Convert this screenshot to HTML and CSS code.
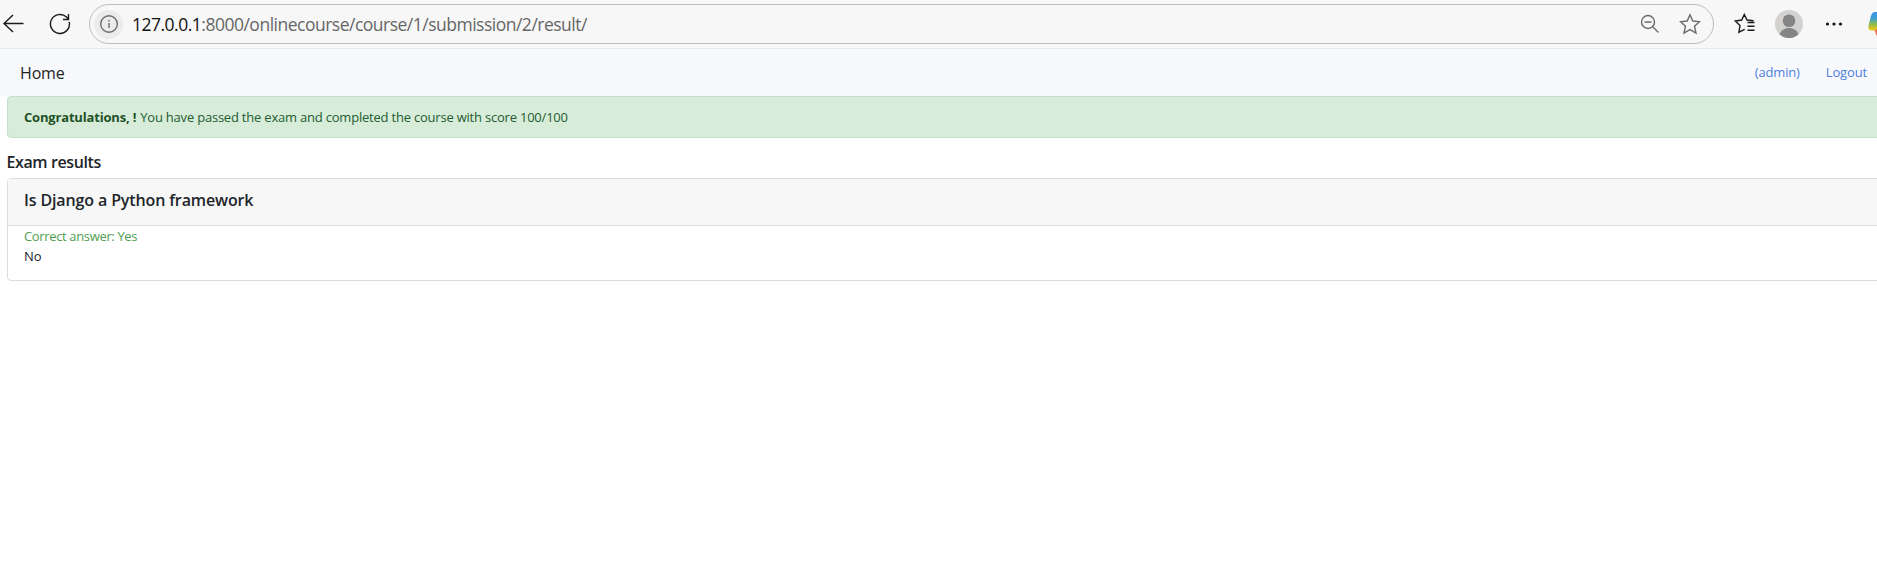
FILE: index.html
```html
<!DOCTYPE html>
<html lang="en">
<head>
<meta charset="utf-8">
<title>Exam results</title>
<link rel="stylesheet" href="styles.css">
</head>
<body>
<header class="toolbar">
  <svg class="back" width="22" height="22" viewBox="0 0 22 22"><path d="M20.5 10.500H1M10 2L1 10.500L10 19"/></svg>
  <svg class="reload" width="22" height="22" viewBox="0 0 22 22"><path d="M20.200 8.800A9.500 9.500 0 1 1 17.500 4.100L19.500 6.200M19.500 1V6.500H14"/></svg>
  <div class="address">
    <span class="info"><svg width="20" height="20" viewBox="0 0 20 20"><circle cx="10" cy="10" r="8.3"/><path d="M10 9V14M10 6V7.600"/></svg></span>
    <span class="url"><b>127.0.0.1</b>:8000/onlinecourse/course/1/submission/2/result/</span>
    <svg class="zoom" width="20" height="20" viewBox="0 0 20 20"><circle cx="8" cy="8" r="6.5"/><path d="M4.500 8H11.500M12.700 12.700L18.500 18.500"/></svg>
    <svg class="star" width="22" height="22" viewBox="0 0 22 22"><path d="M11 1.800L13.800 8L20.500 8.700L15.500 13.200L17 20L11 16.600L5 20L6.500 13.200L1.500 8.700L8.200 8Z"/></svg>
  </div>
  <svg class="favorites" width="22" height="22" viewBox="0 0 22 22"><path d="M19.500 7.700L13 7L10.300 1.500L7.700 7L1.300 8L6 12.500L4.900 19.200L10.700 16.300M13.500 9.500H20.500M13.500 13.300H20.500M13.500 17.200H20.500"/></svg>
  <svg class="avatar" width="28" height="28" viewBox="0 0 28 28"><circle cx="14" cy="14" r="14" fill="#d3d2d0"/><circle cx="14" cy="10.7" r="6.3" fill="#858585"/><path d="M4.500 24.300C6 20.300 9.500 18 14 18S22 20.300 23.500 24.300A14 14 0 0 1 4.500 24.300Z" fill="#858585"/></svg>
  <svg class="more" width="18" height="6" viewBox="0 0 18 6"><circle cx="2.5" cy="3" r="1.6"/><circle cx="9" cy="3" r="1.6"/><circle cx="15.5" cy="3" r="1.6"/></svg>
  <svg class="copilot" width="9" height="26" viewBox="0 0 9 26"><defs><linearGradient id="g" x1="0" y1="0" x2="0" y2="1"><stop offset="0" stop-color="#3b93e8"/><stop offset=".35" stop-color="#3e9fd0"/><stop offset=".65" stop-color="#8bba4c"/><stop offset="1" stop-color="#f5c914"/></linearGradient></defs><path d="M9 1H7C4.500 1 3.500 3 2.600 6L.6 14C-.2 17.500 1 19.500 4 19.500H9Z" fill="url(#g)"/><path d="M6.500 18.500H9V25Q7.500 23 7 20.500Z" fill="#ef7650"/></svg>
</header>
<nav class="navbar">
  <a class="brand">Home</a>
  <a class="link admin">(admin)</a>
  <a class="link logout">Logout</a>
</nav>
<main class="content">
  <div class="alert"><strong>Congratulations, !</strong><span class="message">You have passed the exam and completed the course with score 100/100</span></div>
  <h5 class="heading"><span>Exam results</span></h5>
  <section class="card">
    <h5 class="card-header"><span>Is Django a Python framework</span></h5>
    <div class="card-body">
      <div class="correct"><span>Correct answer: Yes</span></div>
      <div class="choice">No</div>
    </div>
  </section>
</main>
</body>
</html>
```
FILE: styles.css
```css
* { box-sizing: border-box; }
body {
  margin: 0;
  height: 585px;
  overflow: hidden;
  background: #fff;
  color: #212529;
  font: 13px/20px "Open Sans", "Noto Sans", sans-serif;
}
svg { flex: none; fill: none; stroke: #1b1b1b; stroke-width: 1.4; }
.toolbar {
  height: 49px;
  display: flex;
  align-items: center;
  background: #f7f7f7;
  border-bottom: 1px solid #e9ebed;
}
.back { margin-left: 3px; }
.reload { margin-left: 24px; }
.address {
  width: 1625px;
  height: 40px;
  flex: none;
  margin-left: 18px;
  display: flex;
  align-items: center;
  border: 1px solid #bdbdbd;
  border-radius: 20px;
}
.info {
  width: 29px;
  height: 29px;
  margin-left: 4px;
  display: grid;
  place-items: center;
  border-radius: 50%;
  background: #ebebeb;
}
.address svg { stroke: #6c6c6c; }
.url { margin-left: 9px; padding-bottom: 1px; flex: 1; font-size: 17.5px; color: #666; letter-spacing: -.5px; white-space: nowrap; }
.url b { font-weight: 400; color: #111; }
.star { margin: 0 12px 0 19px; }
.favorites { margin-left: 20px; }
.avatar { margin-left: 19px; stroke: none; }
.more { margin-left: 22px; fill: #111; stroke: none; }
.copilot { margin-left: 25px; stroke: none; }
.navbar {
  height: 47px;
  padding: 0 10px 0 20px;
  display: flex;
  align-items: center;
  background: #f8f9fc;
}
.brand { margin-right: auto; font-size: 16px; color: #1f2123; letter-spacing: -.15px; }
.link { padding-bottom: 2px; color: #4f7fe0; letter-spacing: -.15px; }
.logout { margin-left: 26px; }
.content { width: 1900px; padding-left: 7px; }
.alert {
  height: 42px;
  padding-left: 16px;
  display: flex;
  align-items: center;
  border: 1px solid #c3e1cb;
  border-radius: 4px;
  background: #d7ecd9;
  color: #245c31;
  white-space: nowrap;
}
.alert strong { margin-right: 4px; color: #1f5228; letter-spacing: -.18px; }
.message { letter-spacing: -.21px; }
.heading { margin: 14px 0 6px; font-size: 16px; line-height: 20px; font-weight: 600; letter-spacing: -.4px; }
.heading span { margin-left: -.5px; }
.card { height: 103px; border: 1px solid #dcdcdc; border-radius: 4px; }
.card-header {
  height: 47px;
  margin: 0;
  padding: 11px 16px;
  background: #f7f7f7;
  border-bottom: 1px solid #dcdcdc;
  font-size: 16px;
  line-height: 20px;
  font-weight: 600;
  letter-spacing: -.13px;
}
.card-body { padding: 0 16px; }
.correct { color: #4f9e50; letter-spacing: -.35px; }
```
